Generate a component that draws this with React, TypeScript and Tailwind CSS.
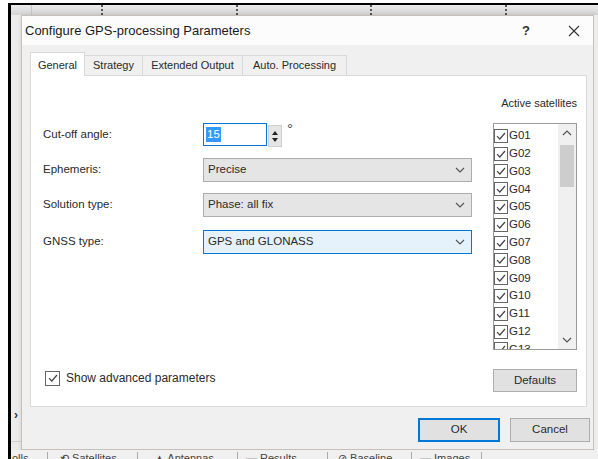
const satellites = ["G01", "G02", "G03", "G04", "G05", "G06", "G07", "G08", "G09", "G10", "G11", "G12", "G13"];

const tabs = [
  { label: "General", w: "w-[55px]", active: true },
  { label: "Strategy", w: "w-[58px]", active: false },
  { label: "Extended Output", w: "w-[100px]", active: false },
  { label: "Auto. Processing", w: "w-[104px]", active: false },
];

function CheckBox() {
  return (
    <span className="flex h-[14px] w-[14px] shrink-0 items-center justify-center border border-[#666] bg-white">
      <svg viewBox="0 0 12 12" className="h-[12px] w-[12px]">
        <path d="M2 6.2 L4.8 9 L10 3" fill="none" stroke="#444" strokeWidth="1.2" />
      </svg>
    </span>
  );
}

function Chevron({ up = false }: { up?: boolean }) {
  return (
    <svg viewBox="0 0 10 6" className="h-[6px] w-[10px]">
      <path d={up ? "M1 5 L5 1 L9 5" : "M1 1 L5 5 L9 1"} fill="none" stroke="#555" strokeWidth="1.2" />
    </svg>
  );
}

function Select({ value, focused = false }: { value: string; focused?: boolean }) {
  return (
    <div
      className={
        focused
          ? "flex h-[24px] w-[269px] items-center justify-between border border-[#0078d7] bg-[#e5f1fb] pl-[4px] pr-[6px]"
          : "flex h-[24px] w-[269px] items-center justify-between border border-[#adadad] bg-[#e5e5e5] pl-[4px] pr-[6px]"
      }
    >
      <span>{value}</span>
      <Chevron />
    </div>
  );
}

function Row({ label, children, className }: { label: string; children: React.ReactNode; className: string }) {
  return (
    <div className={`flex items-center ${className}`}>
      <span className="w-[160px]">{label}</span>
      {children}
    </div>
  );
}

export default function App() {
  return (
    <div className="flex h-[459px] w-[598px] flex-col overflow-hidden bg-white font-['Liberation_Sans',Arial,sans-serif] text-[11.5px] text-[#2a2a2a]">
      <div className="h-[3px]" />
      <div className="flex flex-1">
        <div className="w-[8px]" />
        <div className="flex flex-1 flex-col border-l-[3px] border-t-[2px] border-black bg-[#e9e9e9]">
          {/* column header strip of the app behind the dialog */}
          <div className="flex h-[10px] bg-gradient-to-b from-[#ececec] to-[#d4d4d4]">
            <div className="w-[21px] border-r border-[#c8c8c8]" />
            <div className="w-[71px] border-r-2 border-dotted border-[#555]" />
            <div className="w-[135px] border-r-2 border-dotted border-[#555]" />
            <div className="w-[134px] border-r-2 border-dotted border-[#555]" />
            <div className="w-[135px] border-r-2 border-dotted border-[#555]" />
            <div className="flex-1" />
          </div>

          <div className="flex h-[435px]">
            <div className="flex w-[10px] flex-col bg-[#ececec]">
              <span className="mt-auto mb-[20px] pl-[3px] text-[12px] font-bold leading-[12px] text-[#333]">›</span>
              <div className="mb-[8px] border-t border-[#d0d0d0]" />
            </div>

            {/* dialog window */}
            <div className="flex w-[573px] flex-col border border-[#c9bfb6] bg-[#f0f0f0] shadow-[2px_2px_6px_rgba(0,0,0,0.25)]">
              <div className="flex h-[29px] items-center bg-[#fcfcfc] pl-[3px]">
                <span className="text-[13px] text-[#1a1a1a]">Configure GPS-processing Parameters</span>
                <span className="ml-auto mr-[38px] text-[13px] font-bold text-[#333]">?</span>
                <svg viewBox="0 0 12 12" className="mr-[13px] h-[12px] w-[12px]">
                  <path d="M1 1 L11 11 M11 1 L1 11" stroke="#333" strokeWidth="1.1" />
                </svg>
              </div>

              <div className="flex flex-1 flex-col pl-[8px] pr-[3px] pt-[7px]">
                <div className="flex h-[23px] items-end">
                  {tabs.map((t) =>
                    t.active ? (
                      <div
                        key={t.label}
                        className={`${t.w} z-10 -mb-px flex h-[24px] items-center justify-center border border-b-0 border-[#d9d9d9] bg-white pt-[2px] text-[11px]`}
                      >
                        {t.label}
                      </div>
                    ) : (
                      <div
                        key={t.label}
                        className={`${t.w} flex h-[20px] items-center justify-center border border-l-0 border-b-0 border-[#d9d9d9] bg-[#f0f0f0] text-[11px]`}
                      >
                        {t.label}
                      </div>
                    )
                  )}
                </div>

                <div className="mr-[3px] flex h-[332px] border border-[#d9d9d9] bg-white">
                  <div className="flex flex-1 flex-col pb-[19px] pl-[12px] pt-[47px]">
                    <Row label="Cut-off angle:" className="h-[23px]">
                      <div className="flex h-[23px] w-[64px] items-center border border-[#0078d7] bg-white pl-[2px]">
                        <span className="bg-[#3399ff] px-[1px] leading-[15px] text-white">15</span>
                      </div>
                      <div className="ml-[1px] mt-[3px] flex h-[22px] w-[14px] flex-col items-center justify-center gap-[3px] border border-[#cfcfcf] bg-[#e5e5e5]">
                        <svg viewBox="0 0 6 4" className="h-[4px] w-[6px]">
                          <path d="M0 4 L3 0 L6 4 Z" fill="#222" />
                        </svg>
                        <svg viewBox="0 0 6 4" className="h-[4px] w-[6px]">
                          <path d="M0 0 L3 4 L6 0 Z" fill="#222" />
                        </svg>
                      </div>
                      <span className="ml-[5px] self-start text-[15px] leading-[12px] text-[#444]">°</span>
                    </Row>
                    <Row label="Ephemeris:" className="mt-[12px]">
                      <Select value="Precise" />
                    </Row>
                    <Row label="Solution type:" className="mt-[11px]">
                      <Select value="Phase: all fix" />
                    </Row>
                    <Row label="GNSS type:" className="mt-[13px]">
                      <Select value="GPS and GLONASS" focused />
                    </Row>

                    <label className="mt-auto ml-[2px] flex items-center gap-[6px] text-[12px]">
                      <span className="flex h-[15px] w-[15px] items-center justify-center border border-[#666] bg-white">
                        <svg viewBox="0 0 12 12" className="h-[12px] w-[12px]">
                          <path d="M2 6.2 L4.8 9 L10 3" fill="none" stroke="#444" strokeWidth="1.2" />
                        </svg>
                      </span>
                      Show advanced parameters
                    </label>
                  </div>

                  <div className="mr-[9px] flex w-[84px] flex-col pt-[20px]">
                    <span className="h-[14px] text-right text-[11px] leading-[14px]">Active satellites</span>
                    <div className="mt-[13px] flex h-[227px] overflow-hidden border border-[#9a9a9a] bg-white">
                      <div className="flex flex-1 flex-col overflow-hidden pt-[3px]">
                        {satellites.map((s) => (
                          <div key={s} className="flex h-[17.8px] shrink-0 items-center gap-[1px]">
                            <CheckBox />
                            <span className="text-[11.5px]">{s}</span>
                          </div>
                        ))}
                      </div>
                      <div className="flex w-[18px] flex-col bg-[#f0f0f0]">
                        <div className="flex h-[18px] items-center justify-center">
                          <Chevron up />
                        </div>
                        <div className="mx-[2px] mt-[3px] h-[42px] bg-[#cdcdcd]" />
                        <div className="mt-auto flex h-[18px] items-center justify-center">
                          <Chevron />
                        </div>
                      </div>
                    </div>
                    <button className="mt-[19px] h-[23px] border border-[#adadad] bg-[#e1e1e1] text-[11.5px]">Defaults</button>
                  </div>
                </div>

                <div className="mt-[11px] flex justify-end gap-[10px]">
                  <button className="h-[24px] w-[82px] border-2 border-[#0078d7] bg-[#e1e1e1] text-[11.5px]">OK</button>
                  <button className="h-[24px] w-[80px] border border-[#adadad] bg-[#e1e1e1] text-[11.5px]">Cancel</button>
                </div>
              </div>
            </div>

            <div className="flex-1 bg-[#ececec]" />
          </div>

          {/* tab strip of the app below the dialog */}
          <div className="flex h-[9px] items-start overflow-hidden bg-[#f0f0f0] pt-[2px] text-[11px] leading-[12px] text-[#444]">
            <span className="w-[37px] border-r border-[#aaa] pl-[1px]">olls</span>
            <span className="w-[90px] border-r border-[#aaa] pl-[12px]">⟲ Satellites</span>
            <span className="w-[100px] border-r border-[#aaa] pl-[16px]">▲ Antennas</span>
            <span className="w-[90px] border-r border-[#aaa] pl-[8px]">▬ Results</span>
            <span className="w-[84px] border-r border-[#aaa] pl-[10px]">⊘ Baseline</span>
            <span className="w-[70px] border-r border-[#aaa] pl-[8px]">▬ Images</span>
          </div>
        </div>
      </div>
    </div>
  );
}
